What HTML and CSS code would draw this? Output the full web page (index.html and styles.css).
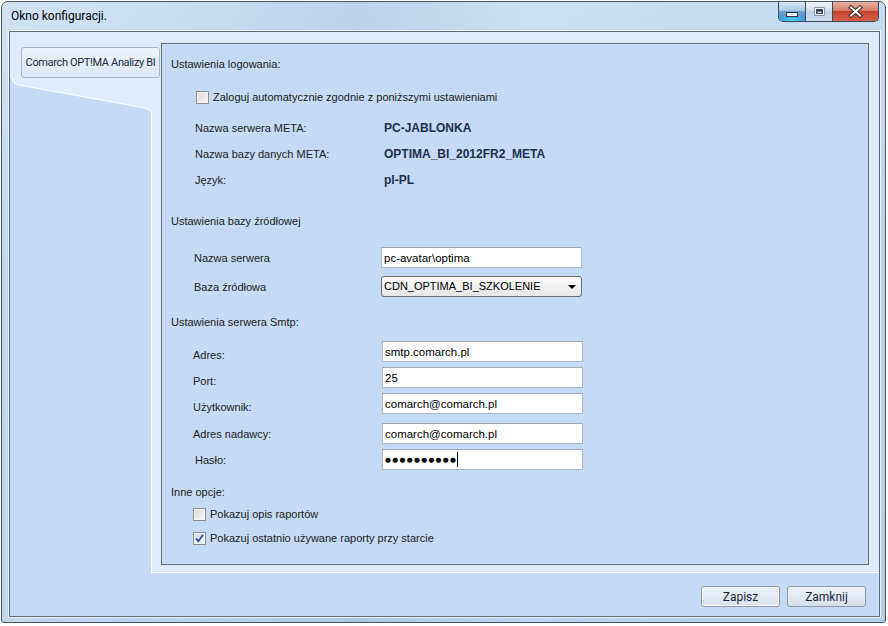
FILE: index.html
```html
<!DOCTYPE html>
<html>
    <head>
        <meta charset="UTF-8">
        <meta name="viewport" content="width=device-width, initial-scale=1.0">
        <title>Okno konfiguracji.</title>
        <link rel="stylesheet" href="styles.css">
    </head>
    <body>
        <div class="window">
            <div class="titlebar">
                <span class="title">Okno konfiguracji.</span>
                <div class="caption">
                    <span class="cap-btn cap-min">
                        <svg width="26" height="19" viewBox="0 0 26 19"><rect x="7.5" y="10.5" width="11" height="4" fill="#eaf2fb" stroke="#2b3440"/></svg>
                    </span>
                    <span class="cap-btn cap-max">
                        <svg width="27" height="19" viewBox="0 0 27 19"><rect x="8.5" y="5.5" width="10" height="8" fill="#2b3440"/><rect x="9.5" y="6.5" width="8" height="6" fill="none" stroke="#f4f8fc" stroke-width="1.2"/><rect x="11" y="9" width="5" height="2.5" fill="#b9cfe6" stroke="#2b3440" stroke-width="0.8"/></svg>
                    </span>
                    <span class="cap-btn cap-close">
                        <svg width="45" height="19" viewBox="0 0 45 19"><path d="M18 5.5 L27 13.5 M27 5.5 L18 13.5" stroke="#3b2a28" stroke-width="4" stroke-linecap="square"/><path d="M18 5.5 L27 13.5 M27 5.5 L18 13.5" stroke="#fff" stroke-width="2" stroke-linecap="square"/></svg>
                    </span>
                </div>
            </div>
            <div class="frame">
                <div class="client">
                    <div class="main">
                        <div class="side">
                            <div class="side-head">
                                <div class="tab">Comarch OPT!MA Analizy BI</div>
                            </div>
                            <svg class="side-curve" width="142" height="36" viewBox="0 0 142 36">
                                <path d="M0 0 L2 0 Q2 6 9 7 L130 29 Q141 31 141 36 L0 36 Z" fill="#c5daf6"/>
                                <path d="M2.5 0 Q2.5 6 9 7 L130 29 Q141.5 31 141.5 36" fill="none" stroke="#ffffff" stroke-width="1"/>
                            </svg>
                            <div class="side-fill"></div>
                        </div>
                        <div class="page">
                            <div class="panel">
                                <div class="section">Ustawienia logowania:</div>
                                <div class="check check-auto"><span class="box"></span>Zaloguj automatycznie zgodnie z poniższymi ustawieniami</div>

                                <div class="info">
                                    <div class="info-row"><span class="info-label">Nazwa serwera META:</span><span class="value">PC-JABLONKA</span></div>
                                    <div class="info-row"><span class="info-label">Nazwa bazy danych META:</span><span class="value">OPTIMA_BI_2012FR2_META</span></div>
                                    <div class="info-row"><span class="info-label">Język:</span><span class="value">pl-PL</span></div>
                                </div>

                                <div class="section section-src">Ustawienia bazy źródłowej</div>
                                <div class="field field-first">
                                    <span class="field-label">Nazwa serwera</span>
                                    <input class="textbox" type="text" value="pc-avatar\optima">
                                </div>
                                <div class="field field-next">
                                    <span class="field-label">Baza źródłowa</span>
                                    <div class="select">CDN_OPTIMA_BI_SZKOLENIE<span class="arrow"></span></div>
                                </div>

                                <div class="section section-smtp">Ustawienia serwera Smtp:</div>
                                <div class="field smtp-first">
                                    <span class="field-label smtp-label low">Adres:</span>
                                    <input class="textbox" type="text" value="smtp.comarch.pl">
                                </div>
                                <div class="field smtp-next">
                                    <span class="field-label smtp-label low">Port:</span>
                                    <input class="textbox" type="text" value="25">
                                </div>
                                <div class="field smtp-next">
                                    <span class="field-label smtp-label low">Użytkownik:</span>
                                    <input class="textbox" type="text" value="comarch@comarch.pl">
                                </div>
                                <div class="field smtp-gap">
                                    <span class="field-label smtp-label">Adres nadawcy:</span>
                                    <input class="textbox" type="text" value="comarch@comarch.pl">
                                </div>
                                <div class="field smtp-next">
                                    <span class="field-label">Hasło:</span>
                                    <div class="textbox password"><span class="dots">●●●●●●●●●●</span><span class="caret"></span></div>
                                </div>

                                <div class="section section-other">Inne opcje:</div>
                                <div class="check check-opt"><span class="box"></span>Pokazuj opis raportów</div>
                                <div class="check check-opt check-last"><span class="box checked"><svg width="11" height="11" viewBox="0 0 11 11"><path d="M2 5.5 L4.3 8.3 L9 1.8" fill="none" stroke="#3550b8" stroke-width="1.9"/></svg></span>Pokazuj ostatnio używane raporty przy starcie</div>
                            </div>
                        </div>
                    </div>
                    <div class="footer">
                        <button class="btn btn-default">Zapisz</button>
                        <button class="btn">Zamknij</button>
                    </div>
                </div>
            </div>
        </div>
    </body>
</html>
```

FILE: styles.css
```css
*{
    margin: 0;
    padding: 0;
    box-sizing: border-box;
}
body{
    background-color: #ffffff;
    font-family: "Liberation Sans", Arial, sans-serif;
    font-size: 11px;
    color: #222;
}
.window{
    width: 885px;
    height: 622px;
    margin: 1px 0 0 1px;
    border: 1px solid #485667;
    border-radius: 7px 7px 3px 3px;
    background: linear-gradient(90deg, rgba(255,255,255,0.18) 0%, rgba(255,255,255,0) 25%, rgba(110,145,190,0.12) 40%, rgba(255,255,255,0.1) 60%, rgba(255,255,255,0) 80%),
                linear-gradient(180deg, #c8dcf2 0%, #b9d0ea 40%, #b5cde8 100%);
    display: flex;
    flex-direction: column;
    overflow: hidden;
}
.titlebar{
    height: 28px;
    display: flex;
    justify-content: space-between;
    align-items: flex-start;
}
.title{
    font-family: Roboto, "Liberation Sans", sans-serif;
    font-size: 12px;
    color: #000;
    padding: 7px 0 0 9px;
}
.caption{
    display: flex;
    margin-right: 6px;
    height: 20px;
    border: 1px solid #3a4a5e;
    border-top: none;
    border-radius: 0 0 5px 5px;
    overflow: hidden;
}
.cap-btn{
    display: block;
    height: 19px;
}
.cap-btn svg{
    display: block;
}
.cap-min{
    width: 26px;
    background: radial-gradient(ellipse 14px 7px at 50% 100%, rgba(70,225,255,0.95), rgba(70,225,255,0) 100%),
                linear-gradient(180deg, #dbe8f6 0%, #a9c6e6 45%, #6fa3d6 50%, #3f8ccc 100%);
}
.cap-max{
    width: 27px;
    border-left: 1px solid #3a4a5e;
    background: linear-gradient(180deg, #eef4fa 0%, #d2e0ef 45%, #bfd2e7 50%, #cddef0 100%);
}
.cap-close{
    width: 46px;
    border-left: 1px solid #3a4a5e;
    background: linear-gradient(180deg, #eab0a3 0%, #d77c6b 45%, #c4432f 50%, #d3604a 100%);
}
.frame{
    flex: 1;
    margin: 0 4px 4px 6px;
    border: 1px solid #f1f6fc;
}
.client{
    height: 100%;
    border: 1px solid #5d6c7d;
    background-color: #dfeafa;
    display: flex;
    flex-direction: column;
}
.main{
    flex: 1;
    display: flex;
}
.side{
    width: 142px;
    display: flex;
    flex-direction: column;
}
.side-head{
    height: 46px;
    padding: 15px 0 0 11px;
}
.tab{
    width: 139px;
    height: 31px;
    border: 1px solid #a7b6c9;
    border-radius: 3px;
    background: linear-gradient(180deg, #eef4fc 0%, #dce7f5 100%);
    font-family: Roboto, "Liberation Sans", sans-serif;
    font-size: 11px;
    letter-spacing: -0.35px;
    line-height: 29px;
    text-align: center;
    white-space: nowrap;
    color: #1b2a3c;
}
.side-curve{
    display: block;
}
.side-fill{
    flex: 1;
    background-color: #c5daf6;
    border-right: 1px solid #ffffff;
}
.page{
    flex: 1;
    padding: 11px 10px 7px 9px;
    border-bottom: 1px solid #ffffff;
}
.panel{
    height: 100%;
    border: 1px solid #6a6d72;
    background-color: #c5daf6;
    padding: 12px 0 0 9px;
}
.section{
    height: 16px;
    line-height: 16px;
    color: #222;
}
.section-src{
    margin-top: 20px;
}
.section-smtp{
    margin-top: 17px;
}
.section-other{
    margin-top: 14px;
}
.check{
    display: flex;
    align-items: center;
    height: 16px;
    color: #222;
}
.check-auto{
    margin-top: 17px;
    padding-left: 25px;
}
.check-opt{
    margin-top: 6px;
    padding-left: 22px;
}
.check-last{
    margin-top: 8px;
}
.box{
    width: 13px;
    height: 13px;
    margin-right: 4px;
    border: 1px solid #8e8f8f;
    background: linear-gradient(135deg, #d9d9d9 0%, #f7f7f7 100%);
    box-shadow: inset 0 0 0 1px #f4f4f4;
    display: flex;
    align-items: center;
    justify-content: center;
}
.info{
    margin-top: 10px;
}
.info-row{
    height: 26px;
    display: flex;
    align-items: center;
    padding-left: 24px;
}
.info-label{
    width: 189px;
    color: #222;
}
.value{
    font-size: 12px;
    font-weight: bold;
    color: #1d2f4e;
}
.field{
    display: flex;
    align-items: center;
    height: 21px;
    padding-left: 24px;
}
.field-first{
    margin-top: 18px;
    padding-left: 23px;
}
.field-next{
    margin-top: 8px;
    padding-left: 23px;
}
.smtp-first{
    margin-top: 11px;
}
.smtp-next{
    margin-top: 5px;
}
.smtp-gap{
    margin-top: 9px;
}
.field-label{
    width: 187px;
    color: #222;
}
.smtp-label{
    margin-left: -2px;
    width: 189px;
}
.low{
    padding-top: 6px;
}
.textbox{
    width: 201px;
    height: 21px;
    border: 1px solid #b3b7be;
    border-top-color: #a3a8b0;
    background-color: #ffffff;
    padding: 0 2px;
    font-family: "Liberation Sans", Arial, sans-serif;
    font-size: 11.5px;
    color: #000;
    outline: none;
}
.password{
    display: flex;
    align-items: center;
}
.dots{
    font-family: "DejaVu Sans", sans-serif;
    font-size: 6.8px;
    letter-spacing: 1.3px;
    color: #000;
}
.caret{
    width: 1px;
    height: 15px;
    background-color: #000;
}
.select{
    width: 201px;
    height: 21px;
    border: 1px solid #6f6f6f;
    border-radius: 3px;
    background: linear-gradient(180deg, #fbfbfb 0%, #f0f0f0 50%, #e6e6e6 100%);
    padding-left: 2px;
    font-size: 11px;
    line-height: 19px;
    color: #000;
    display: flex;
    justify-content: space-between;
    align-items: center;
}
.arrow{
    width: 0;
    height: 0;
    margin-right: 5px;
    border-left: 4px solid transparent;
    border-right: 4px solid transparent;
    border-top: 4px solid #000;
}
.footer{
    height: 43px;
    background-color: #c5daf6;
    display: flex;
    justify-content: flex-end;
    align-items: flex-start;
    gap: 7px;
    padding: 13px 13px 0 0;
}
.btn{
    width: 79px;
    height: 21px;
    border: 1px solid #8f9aa6;
    border-radius: 3px;
    background: linear-gradient(180deg, #eef3f9 0%, #e3eaf3 50%, #d6e0eb 100%);
    font-family: Roboto, "Liberation Sans", sans-serif;
    font-size: 12px;
    color: #1b2a3c;
    cursor: pointer;
}
.btn-default{
    box-shadow: inset 0 0 0 1px #ffffff;
}
```
